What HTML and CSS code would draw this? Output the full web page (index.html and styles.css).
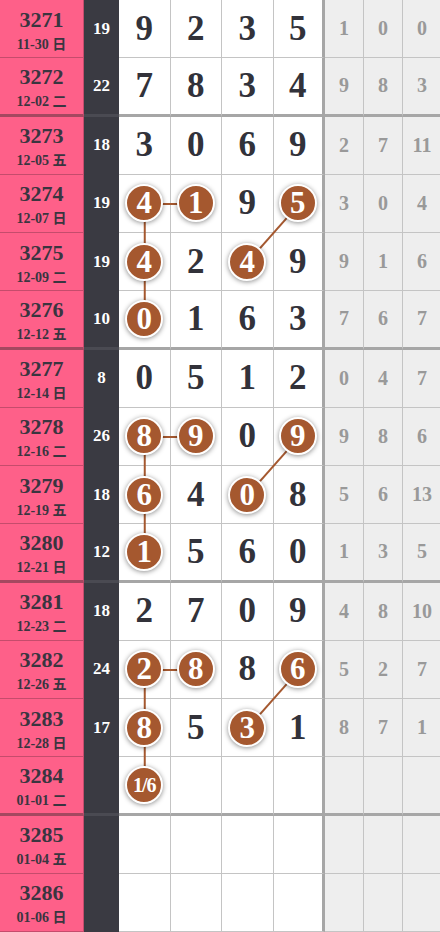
FILE: index.html
```html
<!DOCTYPE html>
<html lang="zh">
<head>
<meta charset="utf-8">
<title>走势图</title>
<link rel="stylesheet" href="styles.css">
</head>
<body>
<div class="board">
  <svg class="links" width="442" height="932" viewBox="0 0 442 932">
    <g stroke="#a5582f" stroke-width="2" fill="none">
      <line x1="144.75" y1="203.9" x2="196.25" y2="203.9"/>
      <line x1="144.75" y1="203.9" x2="144.75" y2="320.4"/>
      <line x1="299.25" y1="203.9" x2="247.75" y2="262.1"/>
      <line x1="144.75" y1="436.9" x2="196.25" y2="436.9"/>
      <line x1="144.75" y1="436.9" x2="144.75" y2="553.4"/>
      <line x1="299.25" y1="436.9" x2="247.75" y2="495.1"/>
      <line x1="144.75" y1="669.9" x2="196.25" y2="669.9"/>
      <line x1="144.75" y1="669.9" x2="144.75" y2="786.4"/>
      <line x1="299.25" y1="669.9" x2="247.75" y2="728.1"/>
    </g>
  </svg>

  <div class="row">
    <div class="id"><b>3271</b><span>11-30 日</span></div><div class="sum">19</div>
    <div class="n">9</div><div class="n">2</div><div class="n">3</div><div class="n last">5</div>
    <div class="g">1</div><div class="g">0</div><div class="g">0</div>
  </div>
  <div class="row sep">
    <div class="id"><b>3272</b><span>12-02 二</span></div><div class="sum">22</div>
    <div class="n">7</div><div class="n">8</div><div class="n">3</div><div class="n last">4</div>
    <div class="g">9</div><div class="g">8</div><div class="g">3</div>
  </div>
  <div class="row">
    <div class="id"><b>3273</b><span>12-05 五</span></div><div class="sum">18</div>
    <div class="n">3</div><div class="n">0</div><div class="n">6</div><div class="n last">9</div>
    <div class="g">2</div><div class="g">7</div><div class="g">11</div>
  </div>
  <div class="row">
    <div class="id"><b>3274</b><span>12-07 日</span></div><div class="sum">19</div>
    <div class="n"><span class="ball">4</span></div><div class="n"><span class="ball">1</span></div><div class="n">9</div><div class="n last"><span class="ball">5</span></div>
    <div class="g">3</div><div class="g">0</div><div class="g">4</div>
  </div>
  <div class="row">
    <div class="id"><b>3275</b><span>12-09 二</span></div><div class="sum">19</div>
    <div class="n"><span class="ball">4</span></div><div class="n">2</div><div class="n"><span class="ball">4</span></div><div class="n last">9</div>
    <div class="g">9</div><div class="g">1</div><div class="g">6</div>
  </div>
  <div class="row sep">
    <div class="id"><b>3276</b><span>12-12 五</span></div><div class="sum">10</div>
    <div class="n"><span class="ball">0</span></div><div class="n">1</div><div class="n">6</div><div class="n last">3</div>
    <div class="g">7</div><div class="g">6</div><div class="g">7</div>
  </div>
  <div class="row">
    <div class="id"><b>3277</b><span>12-14 日</span></div><div class="sum">8</div>
    <div class="n">0</div><div class="n">5</div><div class="n">1</div><div class="n last">2</div>
    <div class="g">0</div><div class="g">4</div><div class="g">7</div>
  </div>
  <div class="row">
    <div class="id"><b>3278</b><span>12-16 二</span></div><div class="sum">26</div>
    <div class="n"><span class="ball">8</span></div><div class="n"><span class="ball">9</span></div><div class="n">0</div><div class="n last"><span class="ball">9</span></div>
    <div class="g">9</div><div class="g">8</div><div class="g">6</div>
  </div>
  <div class="row">
    <div class="id"><b>3279</b><span>12-19 五</span></div><div class="sum">18</div>
    <div class="n"><span class="ball">6</span></div><div class="n">4</div><div class="n"><span class="ball">0</span></div><div class="n last">8</div>
    <div class="g">5</div><div class="g">6</div><div class="g">13</div>
  </div>
  <div class="row sep">
    <div class="id"><b>3280</b><span>12-21 日</span></div><div class="sum">12</div>
    <div class="n"><span class="ball">1</span></div><div class="n">5</div><div class="n">6</div><div class="n last">0</div>
    <div class="g">1</div><div class="g">3</div><div class="g">5</div>
  </div>
  <div class="row">
    <div class="id"><b>3281</b><span>12-23 二</span></div><div class="sum">18</div>
    <div class="n">2</div><div class="n">7</div><div class="n">0</div><div class="n last">9</div>
    <div class="g">4</div><div class="g">8</div><div class="g">10</div>
  </div>
  <div class="row">
    <div class="id"><b>3282</b><span>12-26 五</span></div><div class="sum">24</div>
    <div class="n"><span class="ball">2</span></div><div class="n"><span class="ball">8</span></div><div class="n">8</div><div class="n last"><span class="ball">6</span></div>
    <div class="g">5</div><div class="g">2</div><div class="g">7</div>
  </div>
  <div class="row">
    <div class="id"><b>3283</b><span>12-28 日</span></div><div class="sum">17</div>
    <div class="n"><span class="ball">8</span></div><div class="n">5</div><div class="n"><span class="ball">3</span></div><div class="n last">1</div>
    <div class="g">8</div><div class="g">7</div><div class="g">1</div>
  </div>
  <div class="row sep">
    <div class="id"><b>3284</b><span>01-01 二</span></div><div class="sum"></div>
    <div class="n"><span class="ball small">1/6</span></div><div class="n"></div><div class="n"></div><div class="n last"></div>
    <div class="g"></div><div class="g"></div><div class="g"></div>
  </div>
  <div class="row">
    <div class="id"><b>3285</b><span>01-04 五</span></div><div class="sum"></div>
    <div class="n"></div><div class="n"></div><div class="n"></div><div class="n last"></div>
    <div class="g"></div><div class="g"></div><div class="g"></div>
  </div>
  <div class="row">
    <div class="id"><b>3286</b><span>01-06 日</span></div><div class="sum"></div>
    <div class="n"></div><div class="n"></div><div class="n"></div><div class="n last"></div>
    <div class="g"></div><div class="g"></div><div class="g"></div>
  </div>
</div>
</body>
</html>
```

FILE: styles.css
```css
html, body {
  margin: 0;
  padding: 0;
  overflow: hidden;
  background: #fff;
}

body {
  width: 440px;
  height: 932px;
  font-family: "Liberation Serif", "Noto Sans CJK SC", serif;
  font-weight: bold;
  color: #34343c;
}

.board {
  position: relative;
  width: 442px;
  display: grid;
  grid-template-columns: 84px 35px 51.5px 51.5px 51.5px 51.5px 39px 39px 39px;
  grid-auto-rows: 58.25px;
}

.links {
  position: absolute;
  left: 0;
  top: 0;
  z-index: 1;
  pointer-events: none;
}

.row {
  display: contents;
}

.row > div {
  box-sizing: border-box;
  display: flex;
  align-items: center;
  justify-content: center;
  border-bottom: 1px solid #c4c4c4;
}

.row.sep > div {
  border-bottom: 3px solid #a6a6a6;
}

.id {
  flex-direction: column;
  background: #fe6089;
  border-right: 1px solid #c54c6c;
  color: #3a3540;
  line-height: 1;
  padding-top: 3px;
}

.row > .id {
  border-bottom-color: #c54c6c;
}

.row.sep > .id {
  border-bottom-color: #a44860;
}

.id b {
  font-size: 22px;
}

.id span {
  font-size: 14px;
  margin-top: 7px;
}

.sum {
  background: #3a3a42;
  color: #fff;
  font-size: 17px;
}

.row > .sum {
  border-bottom-color: #3a3a42;
}

.row.sep > .sum {
  border-bottom-color: #4a4a52;
}

.n {
  background: #fff;
  border-right: 1px solid #c4c4c4;
  font-size: 35px;
  color: #32323a;
}

.n.last {
  border-right: 3px solid #a6a6a6;
}

.g {
  background: #eeeeee;
  border-right: 1px solid #c4c4c4;
  font-size: 20px;
  color: #999;
}

.ball {
  position: relative;
  z-index: 2;
  box-sizing: border-box;
  width: 38px;
  height: 38px;
  border-radius: 50%;
  border: 2px solid #fff;
  background: #a5582f;
  color: #fff;
  font-size: 31px;
  line-height: 34px;
  text-align: center;
  box-shadow: 0 1px 5px rgba(0, 0, 0, 0.45);
}

.ball.small {
  font-size: 20px;
  letter-spacing: -1px;
}
```
